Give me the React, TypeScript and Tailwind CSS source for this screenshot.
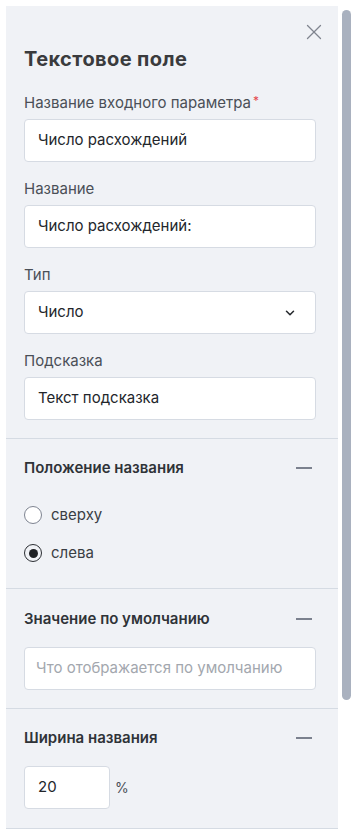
import { X, ChevronDown } from "lucide-react";

const font = { fontFamily: "Inter, 'Noto Sans', sans-serif" };

function Field({ label, value, required }: { label: string; value: string; required?: boolean }) {
  return (
    <div className="flex flex-col gap-[6px]">
      <p className="h-5 text-[15px] leading-5 text-[#4a4f57]">
        {label}
        {required && <span className="ml-[2px] align-top text-[12px] leading-4 text-[#e5484d]">*</span>}
      </p>
      <div className="flex h-[43px] items-center rounded-[4px] border border-[#d6dbe3] bg-white px-[13px] text-[15px] text-[#23262b]">
        {value}
      </div>
    </div>
  );
}

function SectionHeader({ title }: { title: string }) {
  return (
    <div className="flex h-5 items-center justify-between">
      <p className="text-[15px] font-semibold leading-5 text-[#2f3338]">{title}</p>
      <div className="flex w-6 justify-center">
        <span className="block h-[1.5px] w-4 bg-[#7b818e]" />
      </div>
    </div>
  );
}

function Radio({ label, checked }: { label: string; checked?: boolean }) {
  return (
    <div className="flex h-5 items-center gap-[9px]">
      <span
        className={
          checked
            ? "flex h-[18px] w-[18px] items-center justify-center rounded-full border-[1.5px] border-[#2b2e33]"
            : "flex h-[18px] w-[18px] items-center justify-center rounded-full border border-[#7e8491] bg-white"
        }
      >
        {checked && <span className="h-[9px] w-[9px] rounded-full bg-[#1f2125]" />}
      </span>
      <span className="text-[15px] leading-5 text-[#3a3e44]">{label}</span>
    </div>
  );
}

export default function App() {
  return (
    <div className="flex h-[829px] overflow-hidden bg-white pl-[6px] pt-[6px]" style={font}>
      <div className="flex w-[332px] shrink-0 flex-col bg-[#f0f2f6]">
        <div className="flex flex-col pb-[18px] pl-[18px] pr-[22px] pt-[18px]">
          <div className="-mr-[11px] flex h-[14px] justify-end">
            <X size={26} strokeWidth={1.2} className="-mt-[5px] text-[#80858f]" />
          </div>
          <h1 className="mt-[8px] text-[20px] font-bold leading-[26px] tracking-[0.4px] text-[#3a3b3d]">Текстовое поле</h1>
          <div className="mt-[21px] flex flex-col gap-[17px]">
            <Field label="Название входного параметра" value="Число расхождений" required />
            <Field label="Название" value="Число расхождений:" />
            <div className="flex flex-col gap-[6px]">
              <p className="h-5 text-[15px] leading-5 text-[#4a4f57]">Тип</p>
              <div className="flex h-[43px] items-center justify-between rounded-[4px] border border-[#d6dbe3] bg-white pl-[13px] pr-[18px] text-[15px] text-[#23262b]">
                Число
                <ChevronDown size={14} strokeWidth={2.6} className="text-[#26292e]" />
              </div>
            </div>
            <Field label="Подсказка" value="Текст подсказка" />
          </div>
        </div>

        <div className="flex flex-col border-t border-[#d5dbe3] pb-[25px] pl-[18px] pr-[22px] pt-[19px]">
          <SectionHeader title="Положение названия" />
          <div className="mt-[27px] flex flex-col gap-[18px]">
            <Radio label="сверху" />
            <Radio label="слева" checked />
          </div>
        </div>

        <div className="flex flex-col border-t border-[#d5dbe3] pb-[18px] pl-[18px] pr-[22px] pt-[20px]">
          <SectionHeader title="Значение по умолчанию" />
          <div className="mt-[18px] flex h-[43px] items-center rounded-[4px] border border-[#d6dbe3] bg-white px-[11px] text-[15px] text-[#a3a7ae]">
            Что отображается по умолчанию
          </div>
        </div>

        <div className="flex flex-col border-t border-[#d5dbe3] pb-[19px] pl-[18px] pr-[22px] pt-[19px]">
          <SectionHeader title="Ширина названия" />
          <div className="mt-[18px] flex items-center gap-[5px]">
            <div className="flex h-[43px] w-[86px] items-center rounded-[4px] border border-[#d6dbe3] bg-white px-[13px] text-[15px] text-[#23262b]">
              20
            </div>
            <span className="text-[14px] text-[#4a4f57]">%</span>
          </div>
        </div>
        <div className="border-t border-[#d5dbe3]" />
      </div>
      <div className="ml-[4px] mt-[4px] h-[690px] w-[9px] rounded-full bg-[#a9b1bf]" />
    </div>
  );
}
